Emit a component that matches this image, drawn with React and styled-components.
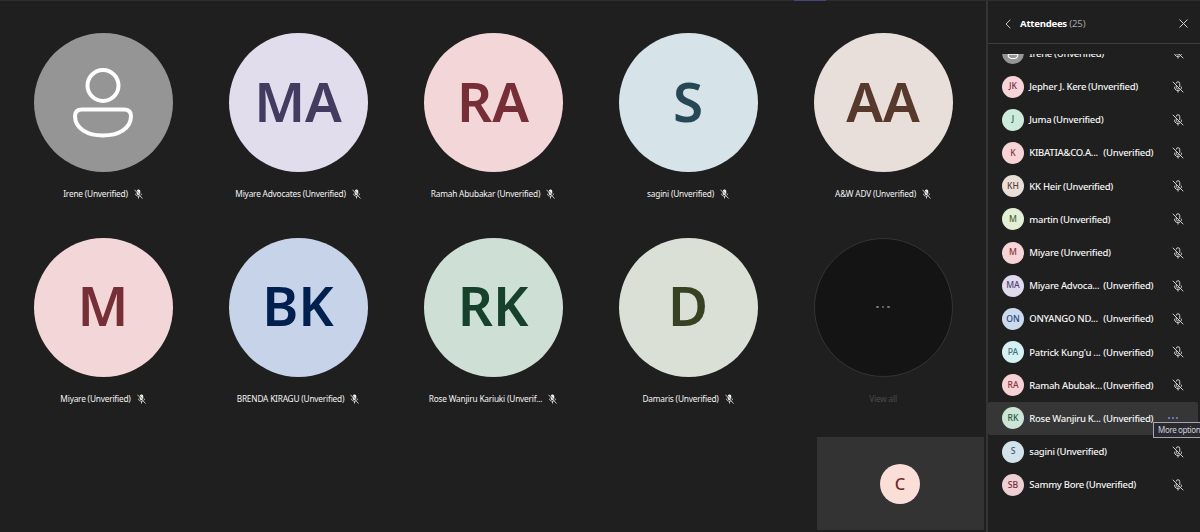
import React from 'react'
import styled, { createGlobalStyle } from 'styled-components'

const GlobalStyle = createGlobalStyle`
  body {
    margin: 0;
    background: #1f1f1f;
    overflow: hidden;
  }
  * {
    box-sizing: border-box;
  }
`

const Meeting = styled.div`
  display: flex;
  width: 1200px;
  height: 532px;
  padding-top: 1px;
  overflow: hidden;
  background: #1f1f1f;
  box-shadow: inset 0 1px #2e2e2f;
  color: #fff;
  font-family: "Noto Sans", "Open Sans", sans-serif;
  position: relative;
`

const ActiveTabMark = styled.div`
  position: absolute;
  top: 0;
  left: 794px;
  width: 32px;
  height: 1px;
  background: #45467a;
`

const Stage = styled.main`
  display: flex;
  flex-direction: column;
  width: 986px;
  padding-top: 32px;
`

const TileGrid = styled.div`
  display: grid;
  grid-template-columns: repeat(5, 195px);
  grid-auto-rows: 204.5px;
  padding-left: 5.5px;
`

const Tile = styled.div`
  display: flex;
  flex-direction: column;
  align-items: center;
`

const Avatar = styled.div`
  display: flex;
  align-items: center;
  justify-content: center;
  flex: none;
  width: 139px;
  height: 139px;
  padding-bottom: ${p => p.$initials ? 3 : 0}px;
  border-radius: 50%;
  background: ${p => p.$bg};
  color: ${p => p.$fg};
  font-size: 54.8px;
  font-weight: 600;
  line-height: 1;
`

const MoreAvatar = styled(Avatar)`
  border: 1px solid #343434;
  gap: 3px;
`

const TileLabel = styled.div`
  display: flex;
  align-items: center;
  gap: 6px;
  height: 14px;
  margin-top: 15px;
  font-size: 8.3px;
  line-height: 14px;
  white-space: nowrap;
  letter-spacing: -0.2px;
  color: ${p => p.$dim ? '#4c4c4c' : '#f4f4f4'};
`

const Dot = styled.span`
  width: ${p => p.$size}px;
  height: ${p => p.$size}px;
  border-radius: 50%;
  background: ${p => p.$color};
`

const SelfView = styled.div`
  display: flex;
  align-items: center;
  justify-content: center;
  align-self: flex-end;
  width: 167px;
  height: 93px;
  margin: -4.6px 2px 0 0;
  background: #333;
`

const SelfAvatar = styled(Avatar)`
  width: 40px;
  height: 40px;
  margin-right: 1px;
  padding-bottom: 0;
  font-size: 16.5px;
  font-weight: 500;
`

const Panel = styled.aside`
  display: flex;
  flex-direction: column;
  width: 214px;
  border-left: 2px solid #343434;
`

const PanelHeader = styled.header`
  display: flex;
  align-items: center;
  height: 43px;
  padding: 3px 12px 0 17px;
  border-bottom: 1px solid #3c3c3c;
`

const PanelTitle = styled.h2`
  flex: 1;
  margin: 0 0 0 9px;
  font-size: 9.6px;
  font-weight: 700;
  line-height: 14px;
  letter-spacing: -0.26px;
`

const Count = styled.span`
  color: #a5a5a5;
  font-weight: 400;
  letter-spacing: -0.1px;
`

const List = styled.div`
  height: 477px;
  margin-top: 10px;
  overflow: hidden;
`

const ListInner = styled.div`
  margin-top: -17.2px;
`

const Row = styled.div`
  display: flex;
  align-items: center;
  height: 33.2px;
  width: 210px;
  padding: 0 14px 0 14px;
  border-radius: 2px;
  background: ${p => p.$hovered ? '#363636' : 'transparent'};
`

const SmallAvatar = styled(Avatar)`
  width: 22px;
  height: 22px;
  padding-bottom: 0;
  font-size: 8.6px;
  font-weight: 550;
`

const Name = styled.div`
  display: flex;
  width: 124px;
  margin-left: 5.3px;
  padding-top: 1px;
  font-size: 9.5px;
  font-weight: 500;
  line-height: 14px;
  white-space: nowrap;
  color: #f4f4f4;
  letter-spacing: -0.27px;
  gap: ${p => p.$cut ? 0 : 2}px;
  justify-content: ${p => p.$cut ? 'space-between' : 'flex-start'};
`

const RowAction = styled.div`
  display: flex;
  flex: 1;
  gap: 2px;
  padding-left: ${p => p.$hovered ? 15 : 0}px;
  justify-content: ${p => p.$hovered ? 'flex-start' : 'flex-end'};
`

const Tooltip = styled.div`
  position: absolute;
  top: 421.5px;
  left: 1153px;
  width: 60px;
  height: 16px;
  padding-left: 4px;
  border: 1px solid #a5a5ac;
  background: #29292f;
  color: #d0d0d8;
  font-size: 8px;
  line-height: 14px;
  letter-spacing: -0.36px;
  white-space: nowrap;
`

const PersonIcon = ({ size, stroke }) => (
  <svg width={size} height={size} viewBox="0 0 70 70" fill="none" stroke="#fff" strokeWidth={stroke}>
    <circle cx="35" cy="17.5" r="15.5" />
    <path d="M14 41.5H56Q63 41.5 63 48C63 61 50 67.5 35 67.5S7 61 7 48Q7 41.5 14 41.5Z" />
  </svg>
)

const MicOffFilled = () => (
  <svg width="9" height="10" viewBox="0 0 18 20" fill="none" stroke="#f0f0f0">
    <rect x="5.5" y="1" width="7" height="11" rx="3" fill="#f0f0f0" stroke="none" />
    <path d="M3 9.5C3 16 15 16 15 9.5M9 14.5V19" strokeWidth="1.6" />
    <path d="M2.5 1 18 18" stroke="#1f1f1f" strokeWidth="1.5" />
    <path d="M1 1.5 17 19" strokeWidth="1.6" />
  </svg>
)

const MicOff = () => (
  <svg width="12" height="12" viewBox="0 0 24 24" fill="none" stroke="#d0d0d0" strokeWidth="2">
    <path d="M8.5 8.5V12.5A3.5 3.5 0 0 0 14 15.3M8.5 5A3.5 3.5 0 0 1 15.5 5V12" />
    <path d="M5 11.5V12.5A7 7 0 0 0 16 18M19 11.5V12.5Q19 14.5 18 16M12 19.5V23" />
    <path d="M1.5 1.5 22.5 22.5" />
  </svg>
)

const BackIcon = () => (
  <svg width="6" height="10" viewBox="0 0 6 10" fill="none" stroke="#c8c8c8" strokeWidth="1">
    <path d="M5.3 0.8 1 5 5.3 9.2" />
  </svg>
)

const CloseIcon = () => (
  <svg width="9" height="9" viewBox="0 0 9 9" stroke="#d0d0d0" strokeWidth="1">
    <path d="M0.5 0.5 8.5 8.5M8.5 0.5 0.5 8.5" />
  </svg>
)

const tiles = [
  { name: 'Irene (Unverified)', bg: '#959595' },
  { name: 'Miyare Advocates (Unverified)', initials: 'MA', bg: '#e2ddec', fg: '#443b60' },
  { name: 'Ramah Abubakar (Unverified)', initials: 'RA', bg: '#f3d6d8', fg: '#762e37' },
  { name: 'sagini (Unverified)', initials: 'S', bg: '#d6e3e9', fg: '#264854' },
  { name: 'A&W ADV (Unverified)', initials: 'AA', bg: '#e8deda', fg: '#56382c' },
  { name: 'Miyare (Unverified)', initials: 'M', bg: '#f3d6d8', fg: '#762e37' },
  { name: 'BRENDA KIRAGU (Unverified)', initials: 'BK', bg: '#c7d3e8', fg: '#002050' },
  { name: 'Rose Wanjiru Kariuki (Unverif...', initials: 'RK', bg: '#cee0d6', fg: '#16412b' },
  { name: 'Damaris (Unverified)', initials: 'D', bg: '#dbe0d6', fg: '#364222' },
]

const attendees = [
  { name: 'Irene', bg: '#959595' },
  { name: 'Jepher J. Kere', initials: 'JK', bg: '#f8d3d9', fg: '#762e37' },
  { name: 'Juma', initials: 'J', bg: '#cdebdc', fg: '#2f6048' },
  { name: 'KIBATIA&CO.A...', initials: 'K', bg: '#f7d5d7', fg: '#8a3440', cut: true },
  { name: 'KK Heir', initials: 'KH', bg: '#eaded9', fg: '#604438' },
  { name: 'martin', initials: 'M', bg: '#e2efd6', fg: '#4c6536' },
  { name: 'Miyare', initials: 'M', bg: '#f6d4d7', fg: '#8a3440' },
  { name: 'Miyare Advoca...', initials: 'MA', bg: '#e0daee', fg: '#51466e', cut: true },
  { name: 'ONYANGO ND...', initials: 'ON', bg: '#ccdaed', fg: '#2a477b', cut: true },
  { name: "Patrick Kung'u ...", initials: 'PA', bg: '#d5f1f3', fg: '#3b727b', cut: true },
  { name: 'Ramah Abubak...', initials: 'RA', bg: '#f6d2d6', fg: '#8a3440', cut: true },
  { name: 'Rose Wanjiru K...', initials: 'RK', bg: '#cce5d7', fg: '#265a3d', cut: true, hovered: true },
  { name: 'sagini', initials: 'S', bg: '#d3e3ec', fg: '#34596a' },
  { name: 'Sammy Bore', initials: 'SB', bg: '#ecd0d3', fg: '#762e37' },
]

const Attendee = ({ name, initials, bg, fg, cut, hovered }) => (
  <Row $hovered={hovered}>
    <SmallAvatar $bg={bg} $fg={fg}>
      {initials || <PersonIcon size={12} stroke={6} />}
    </SmallAvatar>
    <Name $cut={cut}>
      <span>{name}</span>
      <span>(Unverified)</span>
    </Name>
    <RowAction $hovered={hovered}>
      {hovered
        ? [0, 1, 2].map(i => <Dot key={i} $size={2} $color="#7f85f5" />)
        : <MicOff />}
    </RowAction>
  </Row>
)

const App = () => (
  <Meeting>
    <GlobalStyle />
    <ActiveTabMark />
    <Stage>
      <TileGrid>
        {tiles.map(({ name, initials, bg, fg }) => (
          <Tile key={name}>
            <Avatar $bg={bg} $fg={fg} $initials={!!initials}>
              {initials || <PersonIcon size={70} stroke={4} />}
            </Avatar>
            <TileLabel>
              <span>{name}</span>
              <MicOffFilled />
            </TileLabel>
          </Tile>
        ))}
        <Tile>
          <MoreAvatar $bg="#141414">
            {[0, 1, 2].map(i => <Dot key={i} $size={2.5} $color="#747474" />)}
          </MoreAvatar>
          <TileLabel $dim>View all</TileLabel>
        </Tile>
      </TileGrid>
      <SelfView>
        <SelfAvatar $bg="#fcded9" $fg="#6e2b23">C</SelfAvatar>
      </SelfView>
    </Stage>
    <Panel>
      <PanelHeader>
        <BackIcon />
        <PanelTitle>Attendees <Count>(25)</Count></PanelTitle>
        <CloseIcon />
      </PanelHeader>
      <List>
        <ListInner>
          {attendees.map(person => <Attendee key={person.name} {...person} />)}
        </ListInner>
      </List>
    </Panel>
    <Tooltip>More options</Tooltip>
  </Meeting>
)

export default App
